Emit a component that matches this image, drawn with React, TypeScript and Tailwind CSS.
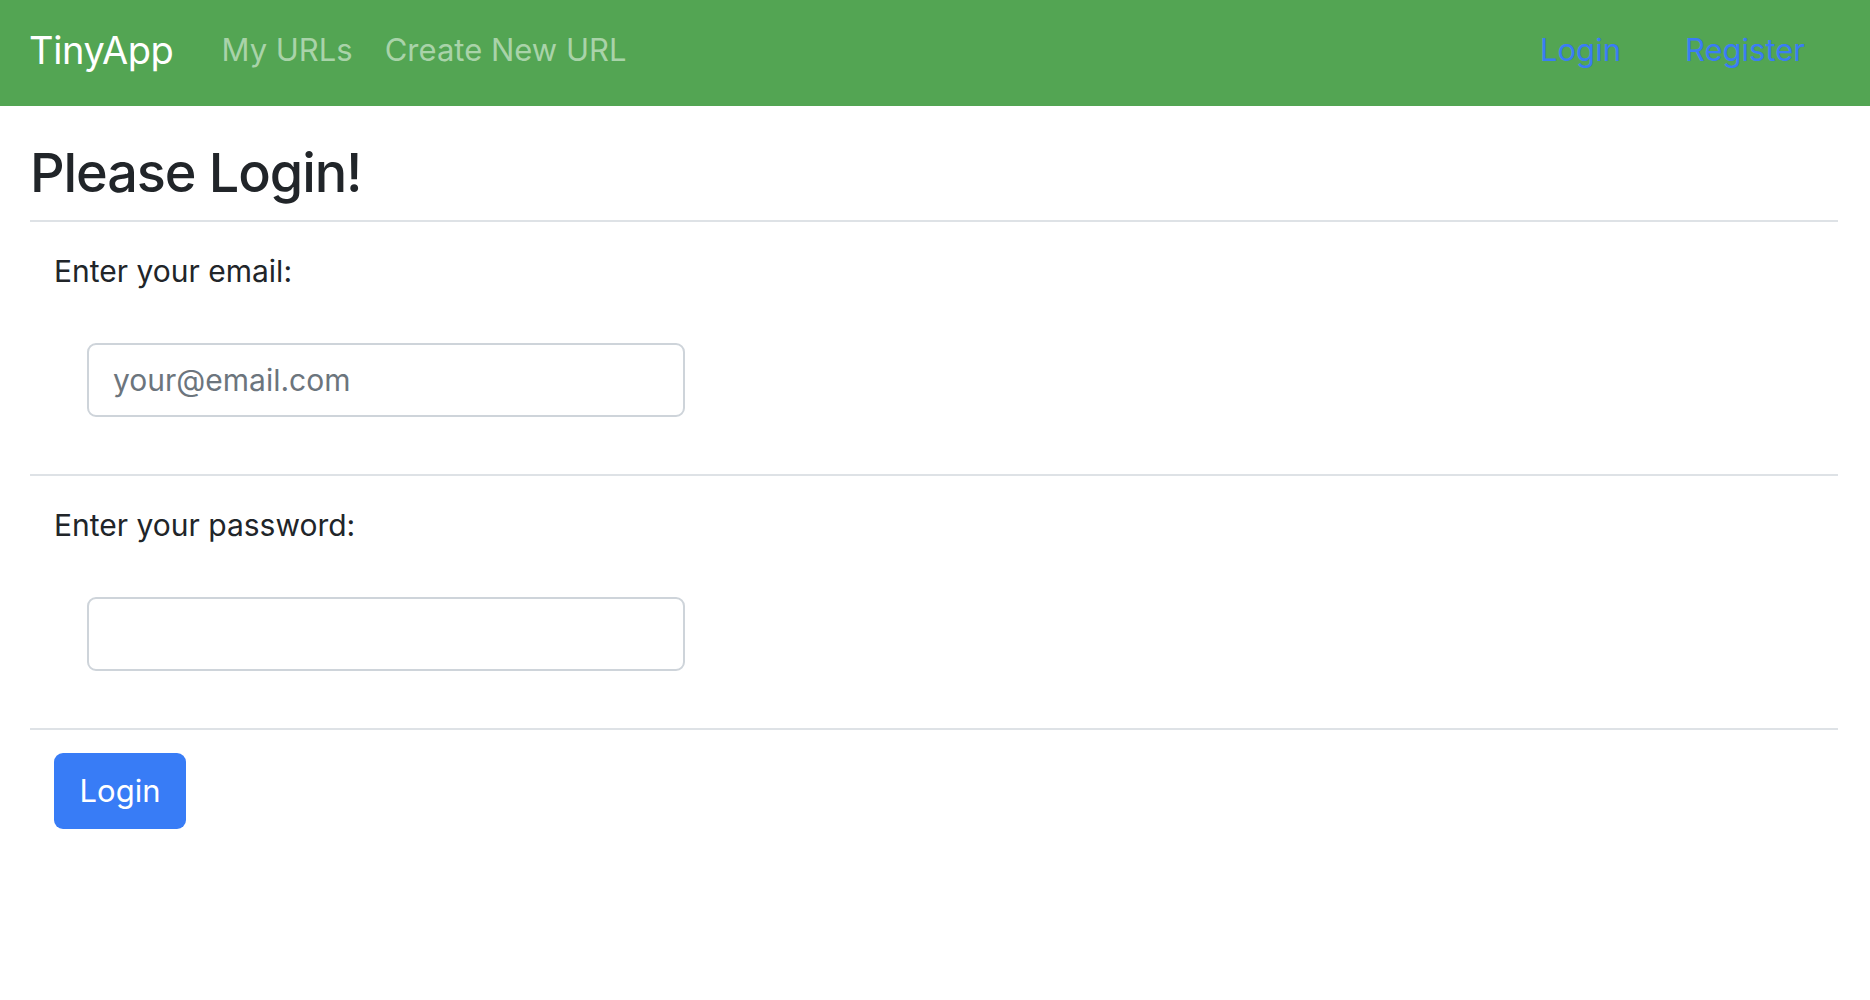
import type { FC } from "react";

const font = { fontFamily: "Inter, 'Noto Sans', sans-serif" };

const NavBar: FC = () => (
	<nav className="flex h-[106px] items-center bg-[#53a553] pb-[6px] pl-[29px] pr-[65px]">
		<a className="mr-[48px] text-[38px] tracking-[-0.01em] text-white">TinyApp</a>
		<a className="mr-[32px] text-[31px] text-[#a9d3a9]">My URLs</a>
		<a className="text-[31px] text-[#a9d3a9]">Create New URL</a>
		<div className="ml-auto flex gap-[64px]">
			<a className="text-[31px] text-[#3a7cf5]">Login</a>
			<a className="text-[31px] text-[#3a7cf5]">Register</a>
		</div>
	</nav>
);

const Rule: FC = () => <div className="h-[2px] bg-[#dee2e6]" />;

namespace FieldRow {
	export interface Props {
		label: string;
		type: string;
		placeholder?: string;
	}
}

const FieldRow: FC<FieldRow.Props> = ({ label, type, placeholder }) => (
	<div className="flex flex-col pb-[57px] pt-[31px]">
		<label className="pl-[24px] text-[30px] leading-[36px] text-[#212529]">{label}</label>
		<input
			type={type}
			placeholder={placeholder}
			className="ml-[57px] mt-[54px] h-[74px] w-[598px] rounded-[9px] border-[2px] border-[#ced4da] bg-white px-[24px] text-[30px] text-[#212529] outline-none placeholder:text-[#6c757d]"
			style={font}
		/>
	</div>
);

export default function App() {
	return (
		<div className="min-h-[1000px] bg-white" style={font}>
			<NavBar />
			<div className="ml-[30px] mr-[32px]">
				<h1 className="mt-[34px] mb-[14px] text-[54px] font-medium leading-[66px] tracking-[-0.02em] text-[#212529]">
					Please Login!
				</h1>
				<Rule />
				<FieldRow label="Enter your email:" type="email" placeholder="your@email.com" />
				<Rule />
				<FieldRow label="Enter your password:" type="password" />
				<Rule />
				<button
					className="ml-[24px] mt-[23px] flex h-[76px] w-[132px] items-center justify-center rounded-[9px] bg-[#387cf6] text-[31px] text-white"
					style={font}
				>
					Login
				</button>
			</div>
		</div>
	);
}
